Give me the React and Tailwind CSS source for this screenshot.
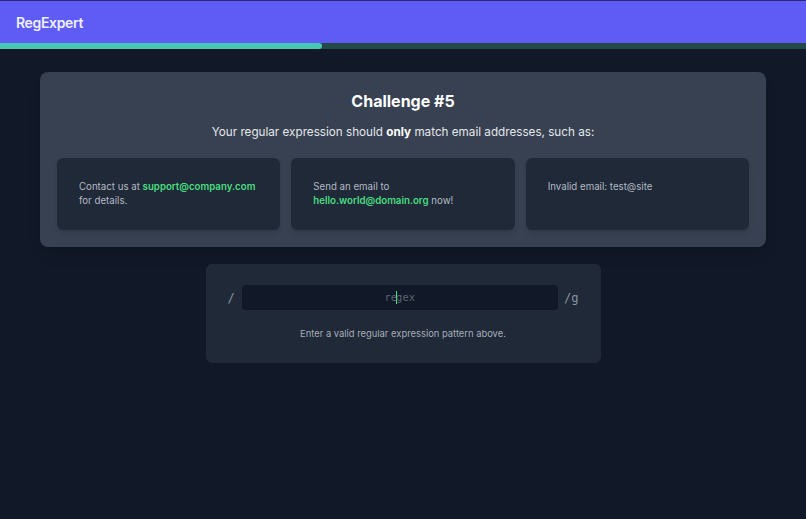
export default function App() {
  const examples = [
    <>
      Contact us at <span className="font-semibold text-[#4ade80]">support@company.com</span> for details.
    </>,
    <>
      Send an email to <span className="font-semibold text-[#4ade80]">hello.world@domain.org</span> now!
    </>,
    <>Invalid email: test@site</>,
  ];

  return (
    <div className="min-h-[519px] bg-[#111827] font-['Inter',sans-serif] text-white">
      <header className="h-[43px] border-t border-[#2b2a7a] bg-[#5f5cf6] flex items-center px-4">
        <span className="text-[14px] font-semibold text-[#eef0ff] tracking-tight">RegExpert</span>
      </header>
      <div className="h-[6px] bg-[#234a47]">
        <div className="h-full w-[40%] rounded-r-full bg-[#45c9b5]" />
      </div>

      <main className="px-10 pt-[23px]">
        <section className="rounded-lg bg-[#374151] px-[17px] pt-[18px] pb-[17px] shadow-lg">
          <h1 className="text-center text-[16px] font-bold leading-[22px]">Challenge #5</h1>
          <p className="mt-[10px] text-center text-[11.7px] leading-[20px] text-[#e5e7eb]">
            Your regular expression should <span className="font-bold text-white">only</span> match email addresses, such as:
          </p>
          <div className="mt-[16px] grid grid-cols-3 gap-[11px]">
            {examples.map((e, i) => (
              <div key={i} className="h-[72px] rounded-md bg-[#1f2937] px-[22px] pt-[22px] text-[9.7px] leading-[14px] text-[#b4bac4] shadow-md">
                {e}
              </div>
            ))}
          </div>
        </section>

        <section className="mx-auto mt-[17px] w-[395px] rounded-md bg-[#1f2937] px-[22px] pt-[21px] pb-[22px]">
          <div className="flex items-center gap-[6px] font-['DejaVu_Sans_Mono',monospace] text-[12px] text-[#8b93a0]">
            <span className="w-[8px]">/</span>
            <div className="flex h-[25px] flex-1 items-center justify-center rounded bg-[#111827] text-[10.5px] text-[#5b6472]">
              re<span className="-mx-[1px] inline-block h-[13px] w-[1px] bg-[#4ade80]" />gex
            </div>
            <span>/g</span>
          </div>
          <p className="mt-[17px] text-center text-[9.4px] text-[#a7adb7]">Enter a valid regular expression pattern above.</p>
        </section>
      </main>
    </div>
  );
}
